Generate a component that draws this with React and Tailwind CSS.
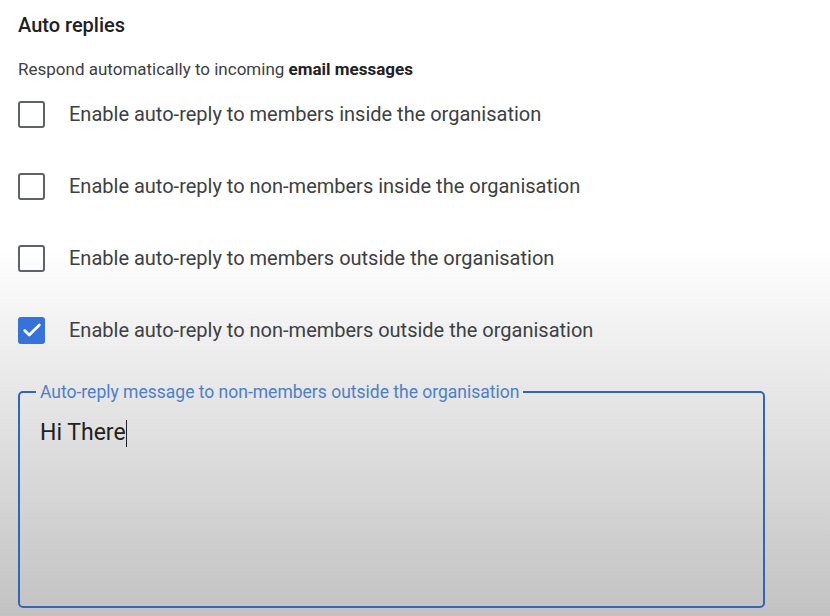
import React from 'react';

const options = [
  { label: 'Enable auto-reply to members inside the organisation', checked: false },
  { label: 'Enable auto-reply to non-members inside the organisation', checked: false },
  { label: 'Enable auto-reply to members outside the organisation', checked: false },
  { label: 'Enable auto-reply to non-members outside the organisation', checked: true },
];

const Box = ({ checked }) =>
  checked ? (
    <div className="w-[27px] h-[27px] rounded-[3px] bg-[#3572dc] flex items-center justify-center">
      <svg width="22" height="22" viewBox="0 0 24 24" fill="none">
        <path d="M4 12.5l5 5L20 6.5" stroke="white" strokeWidth="3" strokeLinecap="round" strokeLinejoin="round" />
      </svg>
    </div>
  ) : (
    <div className="w-[27px] h-[27px] rounded-[3px] border-[2.5px] border-[#5f6368]" />
  );

const App = () => {
  return (
    <main
      className="w-[830px] h-[616px] overflow-hidden bg-linear-to-b from-white from-40% to-[#c2c2c2] pl-[18px] pt-[13px]"
      style={{ fontFamily: 'Roboto, "Noto Sans", sans-serif' }}
    >
      <h1 className="text-[20px] leading-[24px] font-medium text-[#202124]">Auto replies</h1>
      <p className="mt-[20px] text-[17px] leading-[24px] text-[#3c4043]">
        Respond automatically to incoming <span className="font-bold text-[#202124]">email messages</span>
      </p>

      <div className="mt-[9px] flex flex-col gap-[24px]">
        {options.map(o => (
          <label key={o.label} className="h-[48px] flex items-center gap-[24px]">
            <Box checked={o.checked} />
            <span className="text-[20px] text-[#3c4043]">{o.label}</span>
          </label>
        ))}
      </div>

      <fieldset className="mt-[27px] w-[747px] h-[227px] border-2 border-[#2f65bb] rounded-[5px] px-[20px]">
        <legend className="ml-[-4px] px-[4px] text-[17.5px] leading-[22px] text-[#4a80c9]">
          Auto-reply message to non-members outside the organisation
        </legend>
        <div className="mt-[15px] flex items-center text-[23px] leading-[30px] text-[#202124]">
          Hi There
          <span className="inline-block w-[1.5px] h-[27px] bg-[#202124]" />
        </div>
      </fieldset>
    </main>
  );
};

export default App;
